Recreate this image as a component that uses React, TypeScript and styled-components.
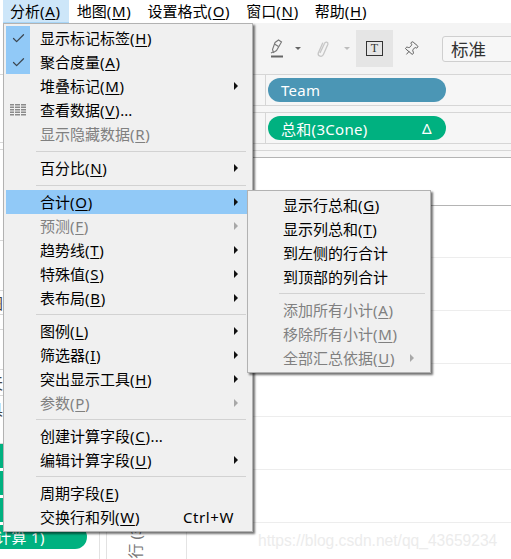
import styled, { createGlobalStyle } from "styled-components";
import { Check, Pin } from "lucide-react";

type Item = {
    label: string;
    mnemonic?: string;
    ellipsis?: boolean;
    sub?: boolean;
    off?: boolean;
    checked?: boolean;
    grid?: boolean;
    active?: boolean;
    shortcut?: string;
};

const mainMenu: Item[][] = [
    [
        {label: "显示标记标签", mnemonic: "H", checked: true},
        {label: "聚合度量", mnemonic: "A", checked: true},
        {label: "堆叠标记", mnemonic: "M", sub: true},
        {label: "查看数据", mnemonic: "V", ellipsis: true, grid: true},
        {label: "显示隐藏数据", mnemonic: "R", off: true},
    ],
    [{label: "百分比", mnemonic: "N", sub: true}],
    [
        {label: "合计", mnemonic: "O", sub: true, active: true},
        {label: "预测", mnemonic: "F", sub: true, off: true},
        {label: "趋势线", mnemonic: "T", sub: true},
        {label: "特殊值", mnemonic: "S", sub: true},
        {label: "表布局", mnemonic: "B", sub: true},
    ],
    [
        {label: "图例", mnemonic: "L", sub: true},
        {label: "筛选器", mnemonic: "I", sub: true},
        {label: "突出显示工具", mnemonic: "H", sub: true},
        {label: "参数", mnemonic: "P", sub: true, off: true},
    ],
    [
        {label: "创建计算字段", mnemonic: "C", ellipsis: true},
        {label: "编辑计算字段", mnemonic: "U", sub: true},
    ],
    [
        {label: "周期字段", mnemonic: "E"},
        {label: "交换行和列", mnemonic: "W", shortcut: "Ctrl+W"},
    ],
];

const subMenu: Item[][] = [
    [
        {label: "显示行总和", mnemonic: "G"},
        {label: "显示列总和", mnemonic: "T"},
        {label: "到左侧的行合计"},
        {label: "到顶部的列合计"},
    ],
    [
        {label: "添加所有小计", mnemonic: "A", off: true},
        {label: "移除所有小计", mnemonic: "M", off: true},
        {label: "全部汇总依据", mnemonic: "U", sub: true, off: true},
    ],
];

const menuBar = [
    {label: "分析", key: "A", open: true},
    {label: "地图", key: "M"},
    {label: "设置格式", key: "O"},
    {label: "窗口", key: "N"},
    {label: "帮助", key: "H"},
];

const sideRows = [
    {h: 52}, {h: 68}, {h: 7}, {h: 91}, {h: 50},
    {h: 24, text: "图"}, {h: 15}, {h: 40, text: "O"}, {h: 26, text: "天"},
    {h: 48, text: "具"},
];

const gridRows = [1, 52, 53, 53, 53, 53, 53];

const MenuRows = ({groups, tallFirst}: { groups: Item[][]; tallFirst?: boolean }) => (
    <>
        {groups.map((group, i) => (
            <div key={i}>
                {i > 0 && <Separator $tall={tallFirst && i < 3}/>}
                {group.map((item) => (
                    <Row key={item.label} $off={item.off} $active={item.active}>
                        <IconCell $checked={item.checked}>
                            {item.checked && <Check size={15} strokeWidth={2} color="#3c4650"/>}
                            {item.grid && <GridIcon/>}
                        </IconCell>
                        <Label>
                            {item.label}
                            {item.mnemonic && <Mnemonic>(<u>{item.mnemonic}</u>)</Mnemonic>}
                            {item.ellipsis && "..."}
                        </Label>
                        {item.shortcut && <Shortcut>{item.shortcut}</Shortcut>}
                        {item.sub && <Arrow $off={item.off}/>}
                    </Row>
                ))}
            </div>
        ))}
    </>
);

const GridIcon = () => (
    <svg width="16" height="12" viewBox="0 0 16 12" fill="#8a8a8a">
        {[0, 2.5, 5, 7.5, 10].map((y) => (
            <g key={y}>
                <rect x="0" y={y} width="4" height="1.5"/>
                <rect x="5" y={y} width="5" height="1.5"/>
                <rect x="11" y={y} width="5" height="1.5"/>
            </g>
        ))}
    </svg>
);

const MarkerIcon = () => (
    <svg width="14" height="19" viewBox="0 0 14 19" fill="none" stroke="#777" strokeWidth="1.1">
        <path d="M5 3.5 L8.5 1 L11.5 3 L6.5 11.5 L3.5 13.5 L2.5 10.5 Z"/>
        <path d="M4.5 5 L8.5 7.5"/>
        <path d="M1 14 L3 13"/>
        <rect x="1" y="16.5" width="12" height="2" fill="#666" stroke="none"/>
    </svg>
);

const ClipIcon = () => (
    <svg width="14" height="18" viewBox="0 0 14 18" fill="none" stroke="#c6c6c6" strokeWidth="1.3" strokeLinecap="round">
        <path d="M4.2 12.5 L8.6 3.2 C9.4 1.4 12.4 1.9 11.9 4.2 L7.4 14.6 C6.2 17.4 1.6 16.6 2.2 13.2 L6.6 3.2"/>
    </svg>
);

export default function App() {
    return (
        <Page>
            <GlobalStyle/>
            <MenuBar>
                {menuBar.map((m) => (
                    <MenuTitle key={m.label} $open={m.open}>
                        {m.label}<Mnemonic>(<u>{m.key}</u>)</Mnemonic>
                    </MenuTitle>
                ))}
            </MenuBar>
            <Workspace>
                <Side>
                    {sideRows.map((r, i) => (
                        <SideRow key={i} $h={r.h}>{r.text}</SideRow>
                    ))}
                    <SidePill/>
                    <SidePill/>
                    <SidePill/>
                    <SidePill><span>计算 1)</span></SidePill>
                </Side>
                <Main>
                    <Toolbar>
                        <ToolSlot $w={24}><MarkerIcon/></ToolSlot>
                        <ToolSlot $w={22}><Caret/></ToolSlot>
                        <ToolSlot $w={27}><ClipIcon/></ToolSlot>
                        <ToolSlot $w={13}><Caret $off/></ToolSlot>
                        <TextToggle><TextBox>T</TextBox></TextToggle>
                        <ToolSlot $w={49}><PinIcon size={16} strokeWidth={1.3} color="#555"/></ToolSlot>
                        <SelectBox>标准</SelectBox>
                    </Toolbar>
                    <Shelf>
                        <ShelfLabel/>
                        <Pill $color="#4b96b5">Team</Pill>
                    </Shelf>
                    <ShelfGap/>
                    <Shelf>
                        <ShelfLabel/>
                        <Pill $color="#00b180">
                            总和(3Cone)
                            <Delta>Δ</Delta>
                        </Pill>
                    </Shelf>
                    <ShelfGap/>
                    <ShelfGap $white/>
                    <ViewArea>
                        <RowHeader><RowTitle>行 (3)</RowTitle></RowHeader>
                        <Rows>
                            {gridRows.map((h, i) => (
                                <GridRow key={i} $h={h} $first={i === 0}/>
                            ))}
                        </Rows>
                    </ViewArea>
                </Main>
            </Workspace>

            <MainMenu>
                <MenuRows groups={mainMenu} tallFirst/>
            </MainMenu>
            <SubMenu>
                <MenuRows groups={subMenu}/>
            </SubMenu>
            <Watermark>https://blog.csdn.net/qq_43659234</Watermark>
        </Page>
    );
}

const GlobalStyle = createGlobalStyle`
    html, body {
        margin: 0;
        padding: 0;
        background: #fff;
    }

    body {
        font-family: "Noto Sans", "Noto Sans CJK SC", sans-serif;
        font-size: 15px;
        color: #000;
    }

    u {
        text-underline-offset: 2px;
    }
`

const Page = styled.div`
    position: relative;
    width: 511px;
    height: 559px;
    overflow: hidden;
    background: #fff;
`

const MenuBar = styled.div`
    display: flex;
    height: 23px;
    padding-left: 3px;
`

const Mnemonic = styled.span`
    letter-spacing: 0.7px;
`

const MenuTitle = styled.div<{ $open?: boolean }>`
    display: flex;
    align-items: center;
    height: 23px;
    box-sizing: border-box;
    padding: 0 8px 0 ${(p) => (p.$open ? "7px" : "8px")};
    line-height: 23px;
    white-space: nowrap;
    background: ${(p) => (p.$open ? "#cde6f9" : "transparent")};
    border-bottom: 1px solid ${(p) => (p.$open ? "#a9d6f7" : "transparent")};
`

const Workspace = styled.div`
    display: flex;
    height: 536px;
`

const Side = styled.div`
    width: 100px;
    flex-shrink: 0;
    border-right: 1px solid #e2e2e2;
    box-sizing: border-box;
    overflow: hidden;
`

const SideRow = styled.div<{ $h: number }>`
    height: ${(p) => p.$h}px;
    box-sizing: border-box;
    border-bottom: 1px solid #d8d8d8;
    text-indent: -12px;
    color: #444;
    line-height: ${(p) => Math.min(p.$h, 26)}px;
`

const SidePill = styled.div`
    width: 87px;
    height: 24px;
    margin-bottom: 3px;
    background: #00b180;
    border-radius: 0 12px 12px 0;
    color: #fff;
    line-height: 24px;
    white-space: nowrap;

    span {
        margin-left: -4px;
        letter-spacing: 0.4px;
    }
`

const Main = styled.div`
    flex: 1;
    min-width: 0;
    margin-left: 6px;
    border-left: 1px solid #e2e2e2;
    display: flex;
    flex-direction: column;
`

const Toolbar = styled.div`
    display: flex;
    align-items: center;
    flex-shrink: 0;
    height: 52px;
    box-sizing: border-box;
    padding-left: 163px;
    background: #f4f4f4;
    border-bottom: 1px solid #d6d6d6;
    overflow: hidden;
`

const ToolSlot = styled.div<{ $w: number }>`
    display: flex;
    align-items: center;
    width: ${(p) => p.$w}px;
    flex-shrink: 0;
`

const Caret = styled.span<{ $off?: boolean }>`
    width: 0;
    height: 0;
    margin-left: 1px;
    border-left: 3px solid transparent;
    border-right: 3px solid transparent;
    border-top: 3px solid ${(p) => (p.$off ? "#bdbdbd" : "#666")};
`

const PinIcon = styled(Pin)`
    margin-left: 10px;
    transform: rotate(40deg);
`

const TextToggle = styled.div`
    display: flex;
    align-items: center;
    justify-content: center;
    flex-shrink: 0;
    width: 37px;
    height: 37px;
    background: #e5e5e5;
`

const TextBox = styled.div`
    width: 17px;
    height: 15px;
    box-sizing: border-box;
    border: 1px solid #333;
    font-family: "Liberation Serif", serif;
    font-size: 12px;
    line-height: 13px;
    text-align: center;
    color: #333;
`

const SelectBox = styled.div`
    flex-shrink: 0;
    width: 120px;
    height: 26px;
    box-sizing: border-box;
    padding-left: 8px;
    border: 1px solid #cfcfcf;
    border-radius: 3px 0 0 3px;
    background: #f7f7f7;
    font-size: 17.5px;
    line-height: 24px;
    color: #333;
`

const Shelf = styled.div`
    display: flex;
    align-items: center;
    flex-shrink: 0;
    height: 31px;
    box-sizing: border-box;
    background: #f6f6f6;
    border-bottom: 1px solid #d6d6d6;
`

const ShelfLabel = styled.div`
    align-self: stretch;
    width: 158px;
    border-right: 1px solid #d6d6d6;
`

const ShelfGap = styled.div<{ $white?: boolean }>`
    height: 7px;
    flex-shrink: 0;
    box-sizing: border-box;
    background: #f6f6f6;
    border-bottom: 1px solid ${(p) => (p.$white ? "#b4b4b4" : "#d6d6d6")};
`

const Pill = styled.div<{ $color: string }>`
    display: flex;
    align-items: center;
    justify-content: space-between;
    width: 178px;
    height: 24px;
    margin-left: 2px;
    box-sizing: border-box;
    padding: 0 14px 0 13px;
    border-radius: 12px;
    background: ${(p) => p.$color};
    color: #fff;
    font-size: 15px;
    letter-spacing: 0.3px;
`

const Delta = styled.span`
    font-size: 15px;
`

const ViewArea = styled.div`
    flex: 1;
    display: flex;
    min-height: 0;
    background: #fff;
`

const RowHeader = styled.div`
    width: 80px;
    flex-shrink: 0;
    box-sizing: border-box;
    display: flex;
    flex-direction: column;
    justify-content: flex-end;
    align-items: flex-start;
    padding: 0 0 1px 21px;
    border-right: 1px solid #e4e4e4;
    overflow: hidden;
`

const RowTitle = styled.div`
    writing-mode: vertical-rl;
    text-orientation: sideways;
    transform: rotate(180deg);
    font-size: 15px;
    line-height: 15px;
    color: #777;
    white-space: nowrap;
`

const Rows = styled.div`
    flex: 1;
    min-width: 0;
    padding-top: 47px;
`

const GridRow = styled.div<{ $h: number; $first?: boolean }>`
    height: ${(p) => p.$h}px;
    box-sizing: border-box;
    border-bottom: 1px solid ${(p) => (p.$first ? "#b4b4b4" : "#ededed")};
`

const Row = styled.div<{ $off?: boolean; $active?: boolean }>`
    display: flex;
    align-items: center;
    height: 24px;
    padding-right: 11px;
    white-space: nowrap;
    color: ${(p) => (p.$off ? "#808080" : "#000")};
    background: ${(p) => (p.$active ? "#91c9f7" : "transparent")};
`

const MenuPanel = styled.div`
    position: absolute;
    box-sizing: border-box;
    background: #f0f0f0;
    border: 1px solid #b2b2b2;
    box-shadow: 2px 2px 2px rgba(0, 0, 0, 0.55);
`

const MainMenu = styled(MenuPanel)`
    left: 3px;
    top: 23px;
    width: 250px;
    padding: 2px 3px 2px 2px;
`

const SubMenu = styled(MenuPanel)`
    left: 247px;
    top: 190px;
    width: 184px;
    padding: 2px 2px 2px 1px;

    ${Row} {
        padding-right: 14px;
    }
`

const IconCell = styled.div<{ $checked?: boolean }>`
    display: flex;
    align-items: center;
    justify-content: center;
    flex-shrink: 0;
    align-self: stretch;
    width: 24px;
    background: ${(p) => (p.$checked ? "#91c9f7" : "transparent")};
`

const Label = styled.div`
    flex: 1;
    padding-left: 10px;
    line-height: 24px;
`

const Shortcut = styled.div`
    margin-right: 4px;
    letter-spacing: 0.6px;
`

const Arrow = styled.span<{ $off?: boolean }>`
    width: 0;
    height: 0;
    border-top: 4px solid transparent;
    border-bottom: 4px solid transparent;
    border-left: 4px solid ${(p) => (p.$off ? "#a8a8a8" : "#111")};
`

const Separator = styled.div<{ $tall?: boolean }>`
    height: 1px;
    margin: ${(p) => (p.$tall ? "5px" : "4px")} 3px 4px 30px;
    background: #d2d2d2;
`

const Watermark = styled.div`
    position: absolute;
    left: 258px;
    top: 532px;
    font-family: "Liberation Sans", sans-serif;
    font-size: 15.6px;
    color: #ececec;
    white-space: nowrap;
`
